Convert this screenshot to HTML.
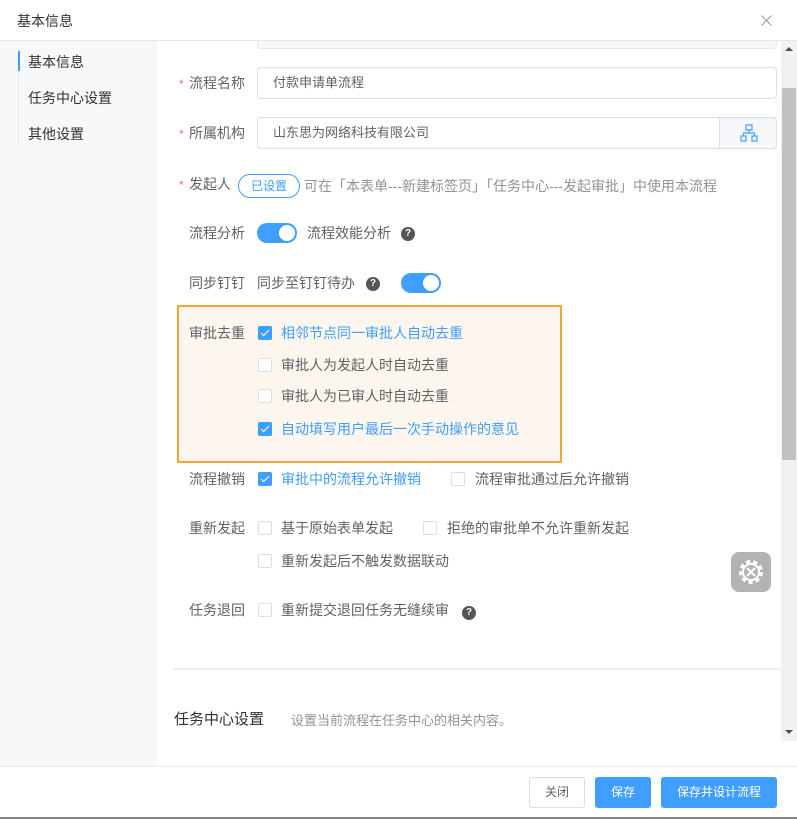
<!DOCTYPE html>
<html><head><meta charset="utf-8"><style>
*{margin:0;padding:0;box-sizing:border-box}
body{width:797px;height:819px;position:relative;background:#fff;font-family:"Liberation Sans","Noto Sans CJK SC",sans-serif;font-size:14px;color:#606266;overflow:hidden}
.a{position:absolute;white-space:nowrap}
.lbl{position:absolute;left:189px;line-height:16px;color:#606266;font-size:14px}
.req:before{content:"*";color:#f56c6c;position:absolute;left:-10px;top:1px;font-size:12px}
.inp{position:absolute;left:257px;width:520px;height:32px;border:1px solid #dcdfe6;border-radius:4px;padding-left:15px;line-height:30px;color:#606266;font-size:13px}
.cb{position:absolute;width:14px;height:14px;border:1px solid #dcdfe6;border-radius:2px;background:#fff}
.cb.on{background:#409eff;border-color:#409eff}
.cb.on:after{content:"";position:absolute;left:4px;top:1px;width:3px;height:7px;border:solid #fff;border-width:0 1px 1px 0;transform:rotate(45deg)}
.t{position:absolute;line-height:16px;font-size:14px;color:#606266;white-space:nowrap}
.blue{color:#409eff}
.q{position:absolute;width:14px;height:14px;border-radius:50%;background:#555;color:#fff;font-size:10px;font-weight:bold;text-align:center;line-height:14px}
.sw{position:absolute;width:40px;height:20px;border-radius:10px;background:#409eff}
.sw:after{content:"";position:absolute;right:2px;top:2px;width:16px;height:16px;border-radius:50%;background:#fff}
.btn{position:absolute;top:777px;height:31px;border-radius:3px;font-size:12px;line-height:31px;text-align:center;color:#fff;background:#409eff}
</style></head><body>
<div class="a" style="left:17px;top:11px;font-size:14px;color:#303133">基本信息</div>
<svg class="a" style="left:761px;top:15px" width="11" height="11" viewBox="0 0 11 11"><path d="M0.5 0.5l10 10M10.5 0.5l-10 10" stroke="#999" stroke-width="1"/></svg>
<div class="a" style="left:0;top:40px;width:797px;height:1px;background:#e4e7ed"></div>
<div class="a" style="left:0;top:41px;width:157px;height:725px;background:#f7f8fa"></div>
<div class="a" style="left:18px;top:51px;width:1px;height:93px;background:#e4e7ed"></div>
<div class="a" style="left:18px;top:51px;width:2px;height:20px;background:#409eff"></div>
<div class="a" style="left:28px;top:52px;color:#303133">基本信息</div>
<div class="a" style="left:28px;top:88px;color:#303133">任务中心设置</div>
<div class="a" style="left:28px;top:124px;color:#303133">其他设置</div>

<div class="a" style="left:257px;top:41px;width:520px;height:8px;background:#f5f7fa;border:1px solid #e4e7ed;border-top:0;border-radius:0 0 4px 4px"></div>

<div class="lbl req" style="top:75px">流程名称</div>
<div class="inp" style="top:67px">付款申请单流程</div>
<div class="lbl req" style="top:125px">所属机构</div>
<div class="inp" style="top:117px">山东思为网络科技有限公司</div>
<div class="a" style="left:719px;top:117px;width:58px;height:32px;background:#f5f7fa;border:1px solid #dcdfe6;border-radius:0 4px 4px 0">
<svg width="58" height="30" viewBox="0 0 58 30"><g fill="none" stroke="#409eff" stroke-width="1.2"><rect x="26" y="7" width="6" height="5"/><rect x="21" y="18" width="5" height="5"/><rect x="32" y="18" width="5" height="5"/><path d="M29 12v3M23.5 18v-3h11v3"/></g></svg></div>

<div class="lbl req" style="top:176px">发起人</div>
<div class="a" style="left:238px;top:174px;width:62px;height:24px;border:1px solid #409eff;border-radius:12px;color:#409eff;font-size:12px;text-align:center;line-height:22px">已设置</div>
<div class="t" style="left:304px;top:178px;color:#909399">可在「本表单---新建标签页」「任务中心---发起审批」中使用本流程</div>

<div class="lbl" style="top:225px">流程分析</div>
<div class="sw" style="left:257px;top:223px"></div>
<div class="t" style="left:307px;top:225px">流程效能分析</div>
<div class="q" style="left:401px;top:227px">?</div>

<div class="lbl" style="top:275px">同步钉钉</div>
<div class="t" style="left:257px;top:275px">同步至钉钉待办</div>
<div class="q" style="left:366px;top:277px">?</div>
<div class="sw" style="left:401px;top:273px"></div>

<div class="a" style="left:177px;top:305px;width:385px;height:158px;border:2px solid #f0a63a;background:#fdf6ee"></div>
<div class="lbl" style="top:325px">审批去重</div>
<div class="cb on" style="left:258px;top:326px"></div><div class="t blue" style="left:281px;top:325px">相邻节点同一审批人自动去重</div>
<div class="cb" style="left:258px;top:358px"></div><div class="t" style="left:281px;top:357px">审批人为发起人时自动去重</div>
<div class="cb" style="left:258px;top:389px"></div><div class="t" style="left:281px;top:388px">审批人为已审人时自动去重</div>
<div class="cb on" style="left:258px;top:422px"></div><div class="t blue" style="left:281px;top:421px">自动填写用户最后一次手动操作的意见</div>

<div class="lbl" style="top:471px">流程撤销</div>
<div class="cb on" style="left:258px;top:472px"></div><div class="t blue" style="left:281px;top:471px">审批中的流程允许撤销</div>
<div class="cb" style="left:451px;top:472px"></div><div class="t" style="left:475px;top:471px">流程审批通过后允许撤销</div>

<div class="lbl" style="top:520px">重新发起</div>
<div class="cb" style="left:258px;top:521px"></div><div class="t" style="left:281px;top:520px">基于原始表单发起</div>
<div class="cb" style="left:423px;top:521px"></div><div class="t" style="left:447px;top:520px">拒绝的审批单不允许重新发起</div>
<div class="cb" style="left:258px;top:554px"></div><div class="t" style="left:281px;top:553px">重新发起后不触发数据联动</div>

<div class="lbl" style="top:602px">任务退回</div>
<div class="cb" style="left:258px;top:603px"></div><div class="t" style="left:281px;top:602px">重新提交退回任务无缝续审</div>
<div class="q" style="left:462px;top:606px">?</div>

<div class="a" style="left:731px;top:552px;width:40px;height:40px;border-radius:8px;background:#b3b3b3">
<svg width="40" height="40" viewBox="0 0 40 40"><circle cx="20" cy="20" r="10" fill="none" stroke="#fff" stroke-width="4" stroke-dasharray="4 3"/><circle cx="20" cy="20" r="8" fill="none" stroke="#fff" stroke-width="2"/><path d="M16 16l8 8M24 16l-8 8" stroke="#fff" stroke-width="2"/></svg></div>

<div class="a" style="left:173px;top:668px;width:608px;height:2px;background:#ebeef5"></div>
<div class="a" style="left:174px;top:708px;font-size:15px;color:#303133">任务中心设置</div>
<div class="a" style="left:291px;top:710px;font-size:13px;color:#909399">设置当前流程在任务中心的相关内容。</div>

<div class="a" style="left:781px;top:41px;width:16px;height:700px;background:#f1f1f1"></div>
<div class="a" style="left:782px;top:88px;width:14px;height:372px;background:#c1c1c1"></div>
<div class="a" style="left:785px;top:47px;border:4px solid transparent;border-bottom:4px solid #505050;border-top:0"></div>
<div class="a" style="left:785px;top:730px;border:4px solid transparent;border-top:4px solid #505050;border-bottom:0"></div>

<div class="a" style="left:0;top:766px;width:797px;height:1px;background:#e4e7ed"></div>
<div class="btn" style="left:529px;width:56px;background:#fff;border:1px solid #dcdfe6;color:#606266;line-height:29px">关闭</div>
<div class="btn" style="left:595px;width:56px">保存</div>
<div class="btn" style="left:661px;width:116px">保存并设计流程</div>
<div class="a" style="left:0;top:817px;width:797px;height:2px;background:#888"></div>
</body></html>
